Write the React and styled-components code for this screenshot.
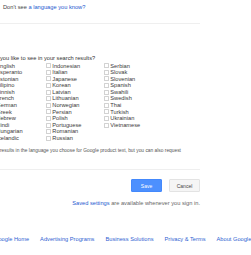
import styled, { createGlobalStyle } from "styled-components";

const GlobalStyle = createGlobalStyle`
  body {
    margin: 0;
    background: #fff;
    font-family: "Liberation Sans", Arial, sans-serif;
    font-size: 5.7px;
    color: #333;
    overflow: hidden;
  }
`;

const Page = styled.div`
  width: 210px;
  margin-left: -10px;
  display: flex;
  flex-direction: column;
`;

const Intro = styled.p`
  margin: 0;
  padding: 3.5px 0 0 13px;
  line-height: 7px;
  color: #444;
`;

const Link = styled.a`
  color: #2459cf;
  text-decoration: none;
`;

const Divider = styled.hr`
  border: 0;
  height: 1px;
  background: #efefef;
  margin: ${(props) => props.$top}px 0 0;
`;

const Heading = styled.p`
  margin: 30.5px 0 0;
  padding-left: 10px;
  line-height: 7px;
  color: #333;
`;

const Grid = styled.div`
  display: grid;
  grid-template-columns: 56px 58px 1fr;
  grid-template-rows: repeat(12, 6.6px);
  margin-top: 1px;
`;

const Option = styled.label`
  display: flex;
  align-items: center;
  gap: 1.3px;
  line-height: 6.6px;
  white-space: nowrap;
  color: #3a3a3a;
`;

const Box = styled.span`
  width: 5px;
  height: 5px;
  box-sizing: border-box;
  border: 0.7px solid #d2d2d2;
  border-radius: 0.5px;
  background: #fff;
  flex: none;
`;

const Note = styled.p`
  margin: 5.6px 0 0;
  padding-left: 10px;
  font-size: 4.85px;
  line-height: 7px;
  color: #555;
  white-space: nowrap;
`;

const Actions = styled.div`
  display: flex;
  justify-content: flex-end;
  gap: 7px;
  margin-top: 9.5px;
`;

const Button = styled.button`
  width: 31px;
  height: 13px;
  padding: 0;
  box-sizing: border-box;
  border-radius: 1px;
  font-family: inherit;
  font-size: 5px;
  border: 1px solid ${(props) => (props.$primary ? "#4489fc" : "#e3e3e3")};
  background: ${(props) => (props.$primary ? "#4d90fe" : "#f5f5f5")};
  color: ${(props) => (props.$primary ? "#fff" : "#444")};
`;

const Saved = styled.p`
  margin: 7.5px 0 0;
  text-align: right;
  line-height: 7px;
  color: #666;
`;

const Footer = styled.nav`
  display: flex;
  gap: 11px;
  margin: 29px 0 0 -6px;
  line-height: 7px;
  white-space: nowrap;
`;

const FooterLink = styled.a`
  color: #2f5fd2;
  text-decoration: none;
`;

const columns = [
  ["English", "Esperanto", "Estonian", "Filipino", "Finnish", "French", "German", "Greek", "Hebrew", "Hindi", "Hungarian", "Icelandic"],
  ["Indonesian", "Italian", "Japanese", "Korean", "Latvian", "Lithuanian", "Norwegian", "Persian", "Polish", "Portuguese", "Romanian", "Russian"],
  ["Serbian", "Slovak", "Slovenian", "Spanish", "Swahili", "Swedish", "Thai", "Turkish", "Ukrainian", "Vietnamese"],
];

const footerLinks = ["Google Home", "Advertising Programs", "Business Solutions", "Privacy & Terms", "About Google"];

const App = () => {
  return (
    <>
      <GlobalStyle />
      <Page>
        <Intro>
          Don't see <Link href="#">a language you know?</Link>
        </Intro>
        <Divider $top={12.5} />
        <Heading>you like to see in your search results?</Heading>
        <Grid>
          {columns.map((col, c) =>
            col.map((lang, i) => (
              <Option key={lang} style={{ gridColumn: c + 1, gridRow: i + 1 }}>
                <Box />
                {lang}
              </Option>
            ))
          )}
        </Grid>
        <Note>results in the language you choose for Google product text, but you can also request</Note>
        <Divider $top={14.3} />
        <Actions>
          <Button $primary>Save</Button>
          <Button>Cancel</Button>
        </Actions>
        <Saved>
          <Link href="#">Saved settings</Link> are available whenever you sign in.
        </Saved>
      </Page>
      <Footer>
        {footerLinks.map((l) => (
          <FooterLink key={l} href="#">
            {l}
          </FooterLink>
        ))}
      </Footer>
    </>
  );
};

export default App;
